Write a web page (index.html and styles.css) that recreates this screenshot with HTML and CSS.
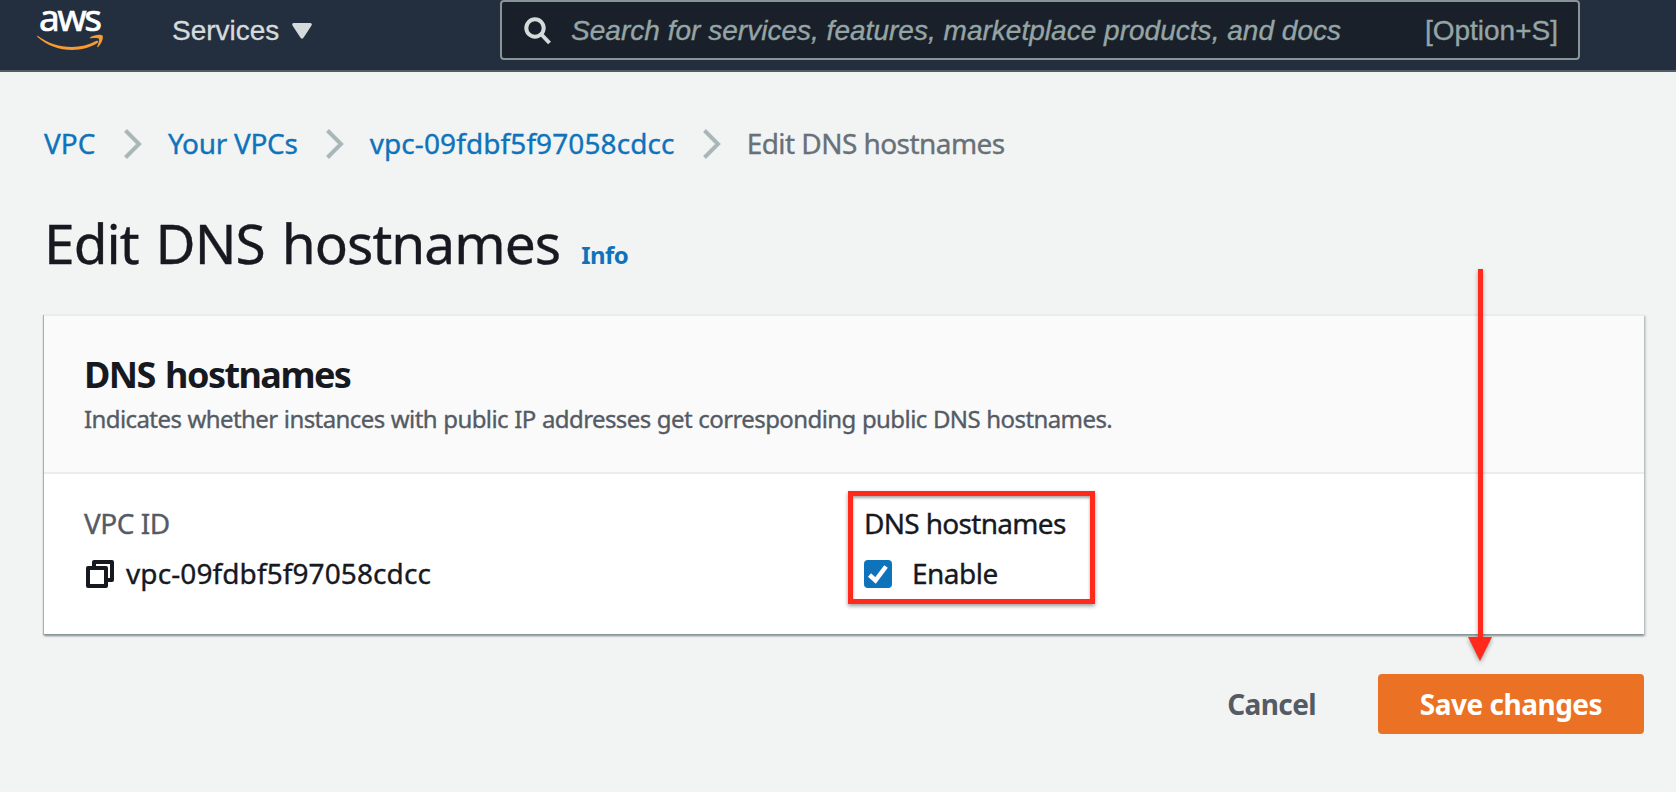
FILE: index.html
```html
<!DOCTYPE html>
<html lang="en">
<head>
<meta charset="utf-8">
<title>Edit DNS hostnames</title>
<link rel="stylesheet" href="styles.css">
</head>
<body>
<header class="nav">
  <a class="logo"><span class="logo-text">aws</span>
    <svg class="smile" width="68" height="18" viewBox="0 0 68 18"><path d="M1 2C18 15 43 16 59 7C61 6 62 8 60.500 9C43 20 17 18 .5 3C-.2 2 .3 1.400 1 2Z"/><path d="M53 3.500C57 .3 64 0 65.500 1.500C67 4 64 10.500 61 13C60.300 13.400 60 13 60.300 12.200C61.500 9.500 62.500 6 62 4.800C61 3.500 57 3.900 53.800 4.300C53 4.300 52.500 4 53 3.500Z"/></svg>
  </a>
  <a class="services"><span class="services-text">Services</span><svg width="20" height="16" viewBox="0 0 20 16"><path d="M1.500 0H18.500Q20.500 .5 19.500 2.500L12 14Q10 17.500 8 14L.5 2.500Q-.5 .5 1.500 0Z"/></svg></a>
  <div class="search">
    <svg width="28" height="28" viewBox="0 0 28 28"><circle cx="11" cy="11" r="8.700"/><path d="M17 17L25.500 26"/></svg>
    <span class="placeholder">Search for services, features, marketplace products, and docs</span>
    <span class="shortcut">[Option+S]</span>
  </div>
</header>
<main class="page">
  <nav class="crumbs">
    <a>VPC</a>
    <svg class="chev" width="18" height="30" viewBox="0 0 18 30"><path d="M1.500 1.500L15 15L1.500 28.500"/></svg>
    <a class="crumb-list">Your VPCs</a>
    <svg class="chev" width="18" height="30" viewBox="0 0 18 30"><path d="M1.500 1.500L15 15L1.500 28.500"/></svg>
    <a class="vpc-id">vpc-09fdbf5f97058cdcc</a>
    <svg class="chev" width="18" height="30" viewBox="0 0 18 30"><path d="M1.500 1.500L15 15L1.500 28.500"/></svg>
    <span class="current">Edit DNS hostnames</span>
  </nav>
  <div class="title-row"><h1>Edit DNS hostnames</h1><a class="info">Info</a></div>
  <section class="card">
    <div class="card-head">
      <h2>DNS hostnames</h2>
      <p class="desc">Indicates whether instances with public IP addresses get corresponding public DNS hostnames.</p>
    </div>
    <div class="card-body">
      <div class="field">
        <div class="label">VPC ID</div>
        <div class="value"><svg width="28" height="28" viewBox="0 0 28 28"><path d="M8 8V2H26V20H20M2 8H20V26H2Z"/></svg><span class="vpc-id">vpc-09fdbf5f97058cdcc</span></div>
      </div>
      <div class="field">
        <div class="group-label">DNS hostnames</div>
        <div class="value"><svg class="check" width="28" height="28" viewBox="0 0 28 28"><rect width="28" height="28" rx="4"/><path d="M5.500 15L11.500 20.500L22 6.500"/></svg><span class="enable">Enable</span></div>
        <div class="highlight"></div>
      </div>
    </div>
  </section>
  <div class="actions"><a class="cancel">Cancel</a><a class="save">Save changes</a></div>
</main>
<svg class="arrow" width="40" height="400" viewBox="0 0 40 400"><path d="M18 3H23V371H32L20 395L8 371H18Z"/></svg>
</body>
</html>
```
FILE: styles.css
```css
* { box-sizing: border-box; }
body {
  margin: 0;
  height: 792px;
  overflow: hidden;
  background: #f2f4f3;
  color: #16191f;
  font: 28px/40px "Noto Sans", "Open Sans", sans-serif;
  -webkit-text-stroke-width: .35px;
  position: relative;
}
svg { display: block; flex: none; }
a, span { white-space: nowrap; }
.nav {
  height: 72px;
  background: #232f3e;
  border-bottom: 2px solid #545b64;
  display: flex;
  align-items: flex-start;
  font-family: "Liberation Sans", Arial, sans-serif;
}
.logo { width: 172px; flex: none; padding-left: 37px; height: 56px; }
.logo-text {
  display: block;
  padding-left: 2px;
  width: max-content;
  height: 34px;
  font: 37px/34px "Noto Sans", sans-serif;
  letter-spacing: -2.3px;
  -webkit-text-stroke-width: .7px;
  color: #fff;
}
.smile { fill: #f79a32; }
.services { width: 328px; flex: none; display: flex; align-items: center; height: 61px; gap: 13px; color: #d5dbdb; }
.services svg { fill: #d5dbdb; }
.search {
  width: 1080px;
  flex: none;
  height: 60px;
  border: 2px solid #879596;
  border-radius: 4px;
  background: #1a202a;
  color: #95a5a6;
  display: flex;
  align-items: center;
  padding: 1px 20px 0 22px;
}
.search svg { fill: none; stroke: #d5dbdb; stroke-width: 4; margin-right: 19px; }
.placeholder { font-style: italic; letter-spacing: .02px; }
.shortcut { margin-left: auto; }
.page { padding: 51px 32px 0 44px; }
.crumbs { display: flex; align-items: center; height: 40px; color: #687078; }
.crumbs a, .info { color: #0f73bb; }
.crumb-list { letter-spacing: -.3px; }
.vpc-id { letter-spacing: .1px; }
.current { letter-spacing: -.55px; }
.chev { fill: none; stroke: #aab7b8; stroke-width: 4; margin: 1px 26px 0 28px; }
.crumbs a:first-child { margin-right: .5px; }
.title-row { display: flex; align-items: baseline; margin-top: 50px; height: 60px; }
h1 { margin: 0 21px 0 0; font-size: 55px; line-height: 60px; font-weight: 400; letter-spacing: -.95px; word-spacing: 3.5px; }
.info { font-size: 24px; font-weight: 700; letter-spacing: -.6px; -webkit-text-stroke-width: 0; }
.card {
  margin-top: 41px;
  background: #fff;
  border-top: 2px solid #eaeded;
  box-shadow: 0 2px 2px 0 #879596, 2px 2px 2px 0 rgba(0, 28, 36, .15), -1px 1px 1px 0 rgba(0, 28, 36, .25);
}
.card-head { background: #fafafa; border-bottom: 2px solid #eaeded; padding: 37px 40px; }
h2 { margin: 0 0 6px; font-size: 36px; line-height: 44px; letter-spacing: -1.55px; word-spacing: 2.5px; -webkit-text-stroke-width: 0; }
.desc { margin: 0; font-size: 24px; line-height: 32px; letter-spacing: -.59px; word-spacing: .6px; color: #545b64; }
.card-body { display: grid; grid-template-columns: 780px 1fr; padding: 29px 40px 41px; }
.field { position: relative; }
.label { color: #545b64; letter-spacing: -.5px; }
.group-label { letter-spacing: -.68px; }
.value { display: flex; align-items: center; height: 40px; margin-top: 10px; }
.value svg { fill: none; stroke: #16191f; stroke-width: 4; stroke-linejoin: round; margin: 2px 12px 0 2px; }
.value .check { stroke: #fff; stroke-width: 4.5; stroke-linejoin: miter; margin: 2px 20px 0 0; }
.enable { letter-spacing: -.5px; }
.check rect { fill: #0f73bb; stroke: none; }
.highlight {
  position: absolute;
  left: -16px;
  top: -12px;
  width: 247px;
  height: 113px;
  border: 5px solid #ff2a1c;
  box-shadow: 0 2px 4px rgba(0, 0, 0, .4), inset 0 2px 3px rgba(0, 0, 0, .35);
}
.actions { display: flex; justify-content: flex-end; align-items: center; margin-top: 40px; height: 60px; font-weight: 700; -webkit-text-stroke-width: 0; }
.cancel { margin-right: 62px; color: #545b64; letter-spacing: -.6px; }
.save {
  width: 266px;
  height: 60px;
  line-height: 60px;
  border-radius: 4px;
  background: #eb7224;
  color: #fff;
  text-align: center;
  letter-spacing: -.5px;
}
.arrow { position: absolute; left: 1460px; top: 266px; fill: #ff2a1c; filter: drop-shadow(0 2px 2px rgba(0, 0, 0, .35)); }
```
